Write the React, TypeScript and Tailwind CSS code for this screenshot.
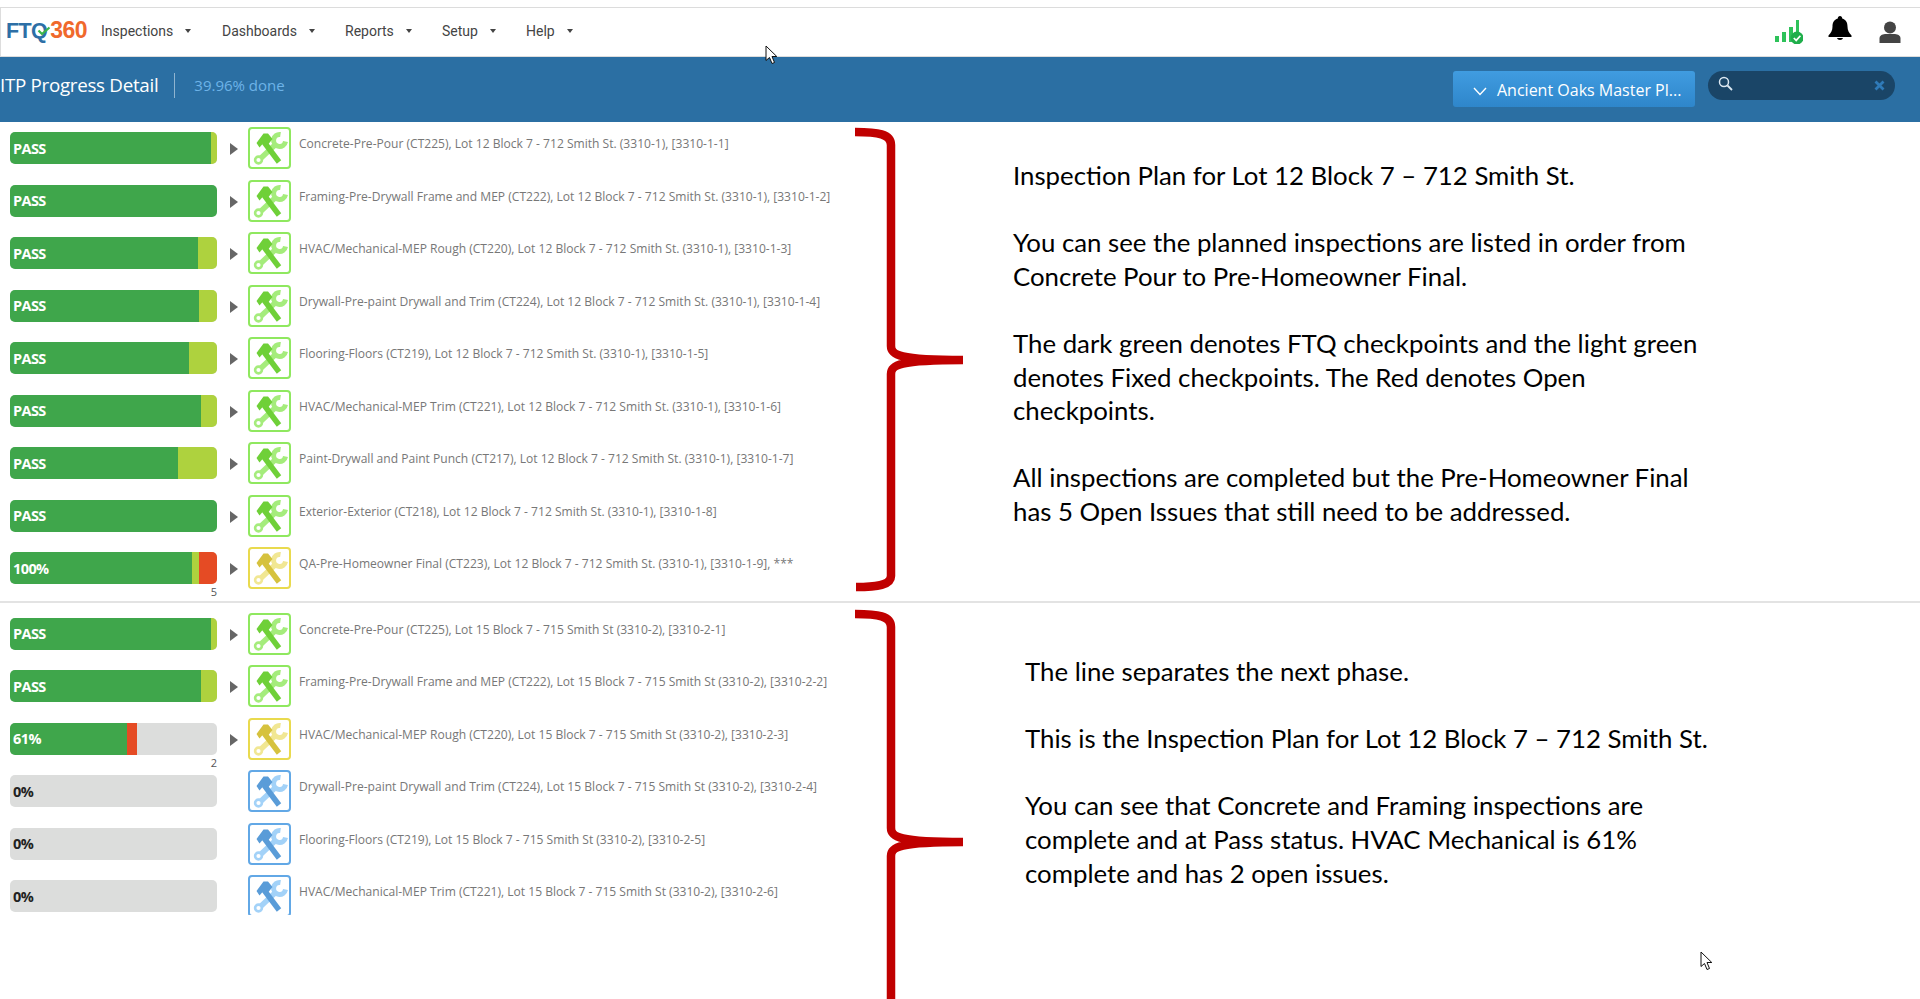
import React from "react";

type Row = { label: string; g: number; l: number; r: number; count?: string; tone: "green" | "yellow" | "blue"; arrow: boolean; text: string };

const section1: Row[] = [
  { label: "PASS", g: 201, l: 6, r: 0, tone: "green", arrow: true, text: "Concrete-Pre-Pour (CT225), Lot 12 Block 7 - 712 Smith St. (3310-1), [3310-1-1]" },
  { label: "PASS", g: 207, l: 0, r: 0, tone: "green", arrow: true, text: "Framing-Pre-Drywall Frame and MEP (CT222), Lot 12 Block 7 - 712 Smith St. (3310-1), [3310-1-2]" },
  { label: "PASS", g: 188, l: 19, r: 0, tone: "green", arrow: true, text: "HVAC/Mechanical-MEP Rough (CT220), Lot 12 Block 7 - 712 Smith St. (3310-1), [3310-1-3]" },
  { label: "PASS", g: 189, l: 18, r: 0, tone: "green", arrow: true, text: "Drywall-Pre-paint Drywall and Trim (CT224), Lot 12 Block 7 - 712 Smith St. (3310-1), [3310-1-4]" },
  { label: "PASS", g: 179, l: 28, r: 0, tone: "green", arrow: true, text: "Flooring-Floors (CT219), Lot 12 Block 7 - 712 Smith St. (3310-1), [3310-1-5]" },
  { label: "PASS", g: 191, l: 16, r: 0, tone: "green", arrow: true, text: "HVAC/Mechanical-MEP Trim (CT221), Lot 12 Block 7 - 712 Smith St. (3310-1), [3310-1-6]" },
  { label: "PASS", g: 168, l: 39, r: 0, tone: "green", arrow: true, text: "Paint-Drywall and Paint Punch (CT217), Lot 12 Block 7 - 712 Smith St. (3310-1), [3310-1-7]" },
  { label: "PASS", g: 207, l: 0, r: 0, tone: "green", arrow: true, text: "Exterior-Exterior (CT218), Lot 12 Block 7 - 712 Smith St. (3310-1), [3310-1-8]" },
  { label: "100%", g: 182, l: 7, r: 18, count: "5", tone: "yellow", arrow: true, text: "QA-Pre-Homeowner Final (CT223), Lot 12 Block 7 - 712 Smith St. (3310-1), [3310-1-9], ***" },
];

const section2: Row[] = [
  { label: "PASS", g: 201, l: 6, r: 0, tone: "green", arrow: true, text: "Concrete-Pre-Pour (CT225), Lot 15 Block 7 - 715 Smith St (3310-2), [3310-2-1]" },
  { label: "PASS", g: 191, l: 16, r: 0, tone: "green", arrow: true, text: "Framing-Pre-Drywall Frame and MEP (CT222), Lot 15 Block 7 - 715 Smith St (3310-2), [3310-2-2]" },
  { label: "61%", g: 117, l: 0, r: 10, count: "2", tone: "yellow", arrow: true, text: "HVAC/Mechanical-MEP Rough (CT220), Lot 15 Block 7 - 715 Smith St (3310-2), [3310-2-3]" },
  { label: "0%", g: 0, l: 0, r: 0, tone: "blue", arrow: false, text: "Drywall-Pre-paint Drywall and Trim (CT224), Lot 15 Block 7 - 715 Smith St (3310-2), [3310-2-4]" },
  { label: "0%", g: 0, l: 0, r: 0, tone: "blue", arrow: false, text: "Flooring-Floors (CT219), Lot 15 Block 7 - 715 Smith St (3310-2), [3310-2-5]" },
  { label: "0%", g: 0, l: 0, r: 0, tone: "blue", arrow: false, text: "HVAC/Mechanical-MEP Trim (CT221), Lot 15 Block 7 - 715 Smith St (3310-2), [3310-2-6]" },
];

const tones = {
  green: { border: "border-[#8fe85f]", dark: "#6fd038", light: "#a5ec7c" },
  yellow: { border: "border-[#e9da4e]", dark: "#d6c23e", light: "#f1e793" },
  blue: { border: "border-[#62a8e6]", dark: "#5a9cd8", light: "#a3d2f8" },
};

function Tools({ tone }: { tone: Row["tone"] }) {
  const t = tones[tone];
  return (
    <div className={`w-[43px] h-[42px] shrink-0 rounded-[4px] border-2 bg-white ${t.border}`}>
      <svg width="39" height="38" viewBox="2 2 39 38">
        <path d="M28 17 L12 32" stroke={t.light} strokeWidth="5.5" fill="none" />
        <circle cx="10.5" cy="33" r="3.4" fill="#fff" stroke={t.light} strokeWidth="2.6" />
        <path d="M32.5 7.5 A6 6 0 1 0 37.5 14.5" stroke={t.light} strokeWidth="5" fill="none" />
        <path d="M16 15 L31 35" stroke={t.dark} strokeWidth="5.5" fill="none" />
        <path d="M8.5 16 L15.5 6.5 L20 6.5 L24.5 12 L18.5 19.5 L15 16.5 L11.5 20.5 Z" fill={t.dark} />
      </svg>
    </div>
  );
}

function ProgressRow({ row }: { row: Row }) {
  const empty = row.g === 0;
  return (
    <div className="flex items-start h-[52.5px] pl-[10px]">
      <div className="w-[207px] shrink-0 pt-[10px]">
        <div className="relative flex h-[32px] rounded-[5px] overflow-hidden bg-[#dcdddc]">
          <div className="bg-[#3fa64b]" style={{ width: row.g }} />
          <div className="bg-[#aed23e]" style={{ width: row.l }} />
          <div className="bg-[#e54b24]" style={{ width: row.r }} />
          <span className={`absolute left-[3px] top-[0.5px] leading-[32px] text-[14.5px] font-bold tracking-[-0.6px] ${empty ? "text-[#222]" : "text-white"}`}>{row.label}</span>
        </div>
        {row.count && <div className="text-right text-[11px] leading-[14px] mt-[1px] text-[#555]">{row.count}</div>}
      </div>
      <div className="w-[31px] shrink-0 pt-[21px] pl-[13px]">
        {row.arrow && (
          <svg width="8" height="12" viewBox="0 0 8 12" className="block">
            <path d="M0 0 L8 6 L0 12 Z" fill="#666" />
          </svg>
        )}
      </div>
      <div className="pt-[5px]">
        <Tools tone={row.tone} />
      </div>
      <div className="pl-[8px] pt-[14px] text-[12.07px] leading-[16px] text-[#777] whitespace-nowrap">{row.text}</div>
    </div>
  );
}

function Caret() {
  return <span className="ml-[12px] w-0 h-0 border-x-[3px] border-x-transparent border-t-[4px] border-t-[#444]" />;
}

function Cursor({ className }: { className: string }) {
  return (
    <svg width="13" height="20" viewBox="0 0 13 20" className={className}>
      <path d="M1 1 L1 15.5 L4.5 12.5 L7 18.5 L9.5 17.5 L7 11.5 L11.8 11.5 Z" fill="#fff" stroke="#111" strokeWidth="1" />
    </svg>
  );
}

export default function App() {
  return (
    <div className="relative h-[999px] overflow-hidden bg-white font-['Open_Sans',sans-serif]">
      <div className="h-[7px] border-b border-[#dcdcdc] box-content" />
      <header className="flex items-center h-[49px] border-l border-b border-[#ddd] font-['Roboto',sans-serif]">
        <div className="relative w-[100px] shrink-0 pl-[5px] font-['Liberation_Sans',sans-serif] leading-[46px] font-bold whitespace-nowrap -mt-[2px]">
          <span className="text-[21.5px] tracking-[-0.6px] text-[#2d6fa6]">FTQ</span>
          <span className="ml-[3px] text-[23px] tracking-[-0.5px] text-[#f0692c]">360</span>
          <svg width="14" height="10" viewBox="0 0 14 10" className="absolute left-[36px] top-[19px]">
            <path d="M1.5 4.5 L5 8 L12.5 1.5" stroke="#3ab54a" strokeWidth="2.2" fill="none" />
          </svg>
        </div>
        <nav className="flex items-center text-[14px] text-[#444] -mt-[2px]">
          <span className="flex items-center w-[121px]">Inspections<Caret /></span>
          <span className="flex items-center w-[123px]">Dashboards<Caret /></span>
          <span className="flex items-center w-[97px]">Reports<Caret /></span>
          <span className="flex items-center w-[84px]">Setup<Caret /></span>
          <span className="flex items-center">Help<Caret /></span>
        </nav>
        <div className="ml-auto flex items-center pr-[19px]">
          <svg width="30" height="26" viewBox="0 0 30 26" className="-mt-[2px]">
            <rect x="2" y="18" width="4" height="6" fill="#2ec25a" />
            <rect x="9" y="14" width="4" height="10" fill="#2ec25a" />
            <rect x="16" y="9" width="4" height="15" fill="#2ec25a" />
            <rect x="23" y="2" width="3" height="14" fill="#2ec25a" />
            <circle cx="24" cy="20" r="6.5" fill="#1fae4b" />
            <path d="M20.8 20 L23.2 22.4 L27.4 17.8" stroke="#fff" strokeWidth="1.7" fill="none" />
          </svg>
          <svg width="24" height="25" viewBox="0 0 24 25" className="ml-[25px] -mt-[7px]">
            <path d="M12 0 C13.4 0 14.2 1 14.2 2.4 C18 3.4 19.5 6.6 19.5 10.5 C19.5 14.5 21 17 23.5 19.5 L23.5 21 L0.5 21 L0.5 19.5 C3 17 4.5 14.5 4.5 10.5 C4.5 6.6 6 3.4 9.8 2.4 C9.8 1 10.6 0 12 0 Z" fill="#000" />
            <path d="M9 22 H15 C14.5 24.5 9.5 24.5 9 22 Z" fill="#000" />
          </svg>
          <svg width="22" height="22" viewBox="0 0 22 22" className="ml-[27px] -mt-[1px]">
            <circle cx="11" cy="6.5" r="6" fill="#444" />
            <path d="M0.5 22 V17.5 C0.5 14.5 3 13.5 6 13 H16 C19 13.5 21.5 14.5 21.5 17.5 V22 Z" fill="#444" />
          </svg>
        </div>
      </header>
      <div className="flex items-start h-[65px] bg-[#2b6fa3]">
        <div className="flex items-center h-[25px] mt-[16px]">
          <span className="text-[18.8px] text-white tracking-[-0.3px] whitespace-nowrap">ITP Progress Detail</span>
          <span className="ml-[16px] w-px h-[25px] bg-[#8fb4d0]" />
          <span className="ml-[19px] text-[15px] text-[#6db3e8] whitespace-nowrap">39.96% done</span>
        </div>
        <div className="ml-auto flex items-start mt-[14px] pr-[25px]">
          <button className="flex items-center w-[242px] h-[36px] pl-[20px] pt-[2px] rounded-[3px] bg-gradient-to-b from-[#409ce0] to-[#2e86cb] text-white text-[16px] whitespace-nowrap">
            <svg width="14" height="9" viewBox="0 0 14 9" className="mr-[10px] mt-[2px]">
              <path d="M1 1 L7 7.5 L13 1" stroke="#fff" strokeWidth="1.4" fill="none" />
            </svg>
            Ancient Oaks Master Pl...
          </button>
          <div className="flex items-center justify-between w-[187px] h-[29px] ml-[13px] px-[10px] rounded-full bg-[#1a4567]">
            <svg width="15" height="15" viewBox="0 0 15 15" className="-mt-[4px]">
              <circle cx="6" cy="6" r="4.5" stroke="#dce8f2" strokeWidth="1.5" fill="none" />
              <path d="M9.5 9.5 L14 14" stroke="#dce8f2" strokeWidth="1.8" />
            </svg>
            <svg width="11" height="11" viewBox="0 0 11 11">
              <path d="M1.5 1.5 L9.5 9.5 M9.5 1.5 L1.5 9.5" stroke="#2f7ab8" strokeWidth="2.8" />
            </svg>
          </div>
        </div>
      </div>

      <section className="flex items-start h-[481px] border-b-2 border-[#e3e3e3]">
        <div className="w-[855px] shrink-0">
          {section1.map((r) => <ProgressRow key={r.text} row={r} />)}
        </div>
        <svg width="110" height="479" viewBox="855 122 110 479" className="shrink-0">
          <path d="M855 132 C878 132 891 134 891 145 L891 346 C891 355 899 360 963 360 M963 360 C899 360 891 365 891 374 L891 576 C891 585 878 587 856 587" stroke="#c00000" strokeWidth="8.5" fill="none" />
        </svg>
        <div className="ml-[48px] pt-[37px] font-['Lato',sans-serif] text-[25.8px] leading-[33.6px] text-black whitespace-nowrap">
          <p className="mb-[33.6px]">Inspection Plan for Lot 12 Block 7 – 712 Smith St.</p>
          <p className="mb-[33.6px]">You can see the planned inspections are listed in order from<br />Concrete Pour to Pre-Homeowner Final.</p>
          <p className="mb-[33.6px]">The dark green denotes FTQ checkpoints and the light green<br />denotes Fixed checkpoints. The Red denotes Open<br />checkpoints.</p>
          <p>All inspections are completed but the Pre-Homeowner Final<br />has 5 Open Issues that still need to be addressed.</p>
        </div>
      </section>

      <section className="flex items-start h-[396px]">
        <div className="w-[855px] shrink-0 mt-[4.5px] h-[307.5px] overflow-hidden">
          {section2.map((r) => <ProgressRow key={r.text} row={r} />)}
        </div>
        <svg width="110" height="396" viewBox="855 603 110 396" className="shrink-0">
          <path d="M855 614 C878 614 891 616 891 627 L891 828 C891 837 899 842 963 842 M963 842 C899 842 891 847 891 856 L891 1000" stroke="#c00000" strokeWidth="8.5" fill="none" />
        </svg>
        <div className="ml-[60px] pt-[52px] font-['Lato',sans-serif] text-[25.8px] leading-[33.6px] text-black whitespace-nowrap">
          <p className="mb-[33.6px]">The line separates the next phase.</p>
          <p className="mb-[33.6px]">This is the Inspection Plan for Lot 12 Block 7 – 712 Smith St.</p>
          <p>You can see that Concrete and Framing inspections are<br />complete and at Pass status. HVAC Mechanical is 61%<br />complete and has 2 open issues.</p>
        </div>
      </section>

      <Cursor className="absolute left-[765px] top-[45px]" />
      <Cursor className="absolute left-[1700px] top-[951px]" />
    </div>
  );
}
